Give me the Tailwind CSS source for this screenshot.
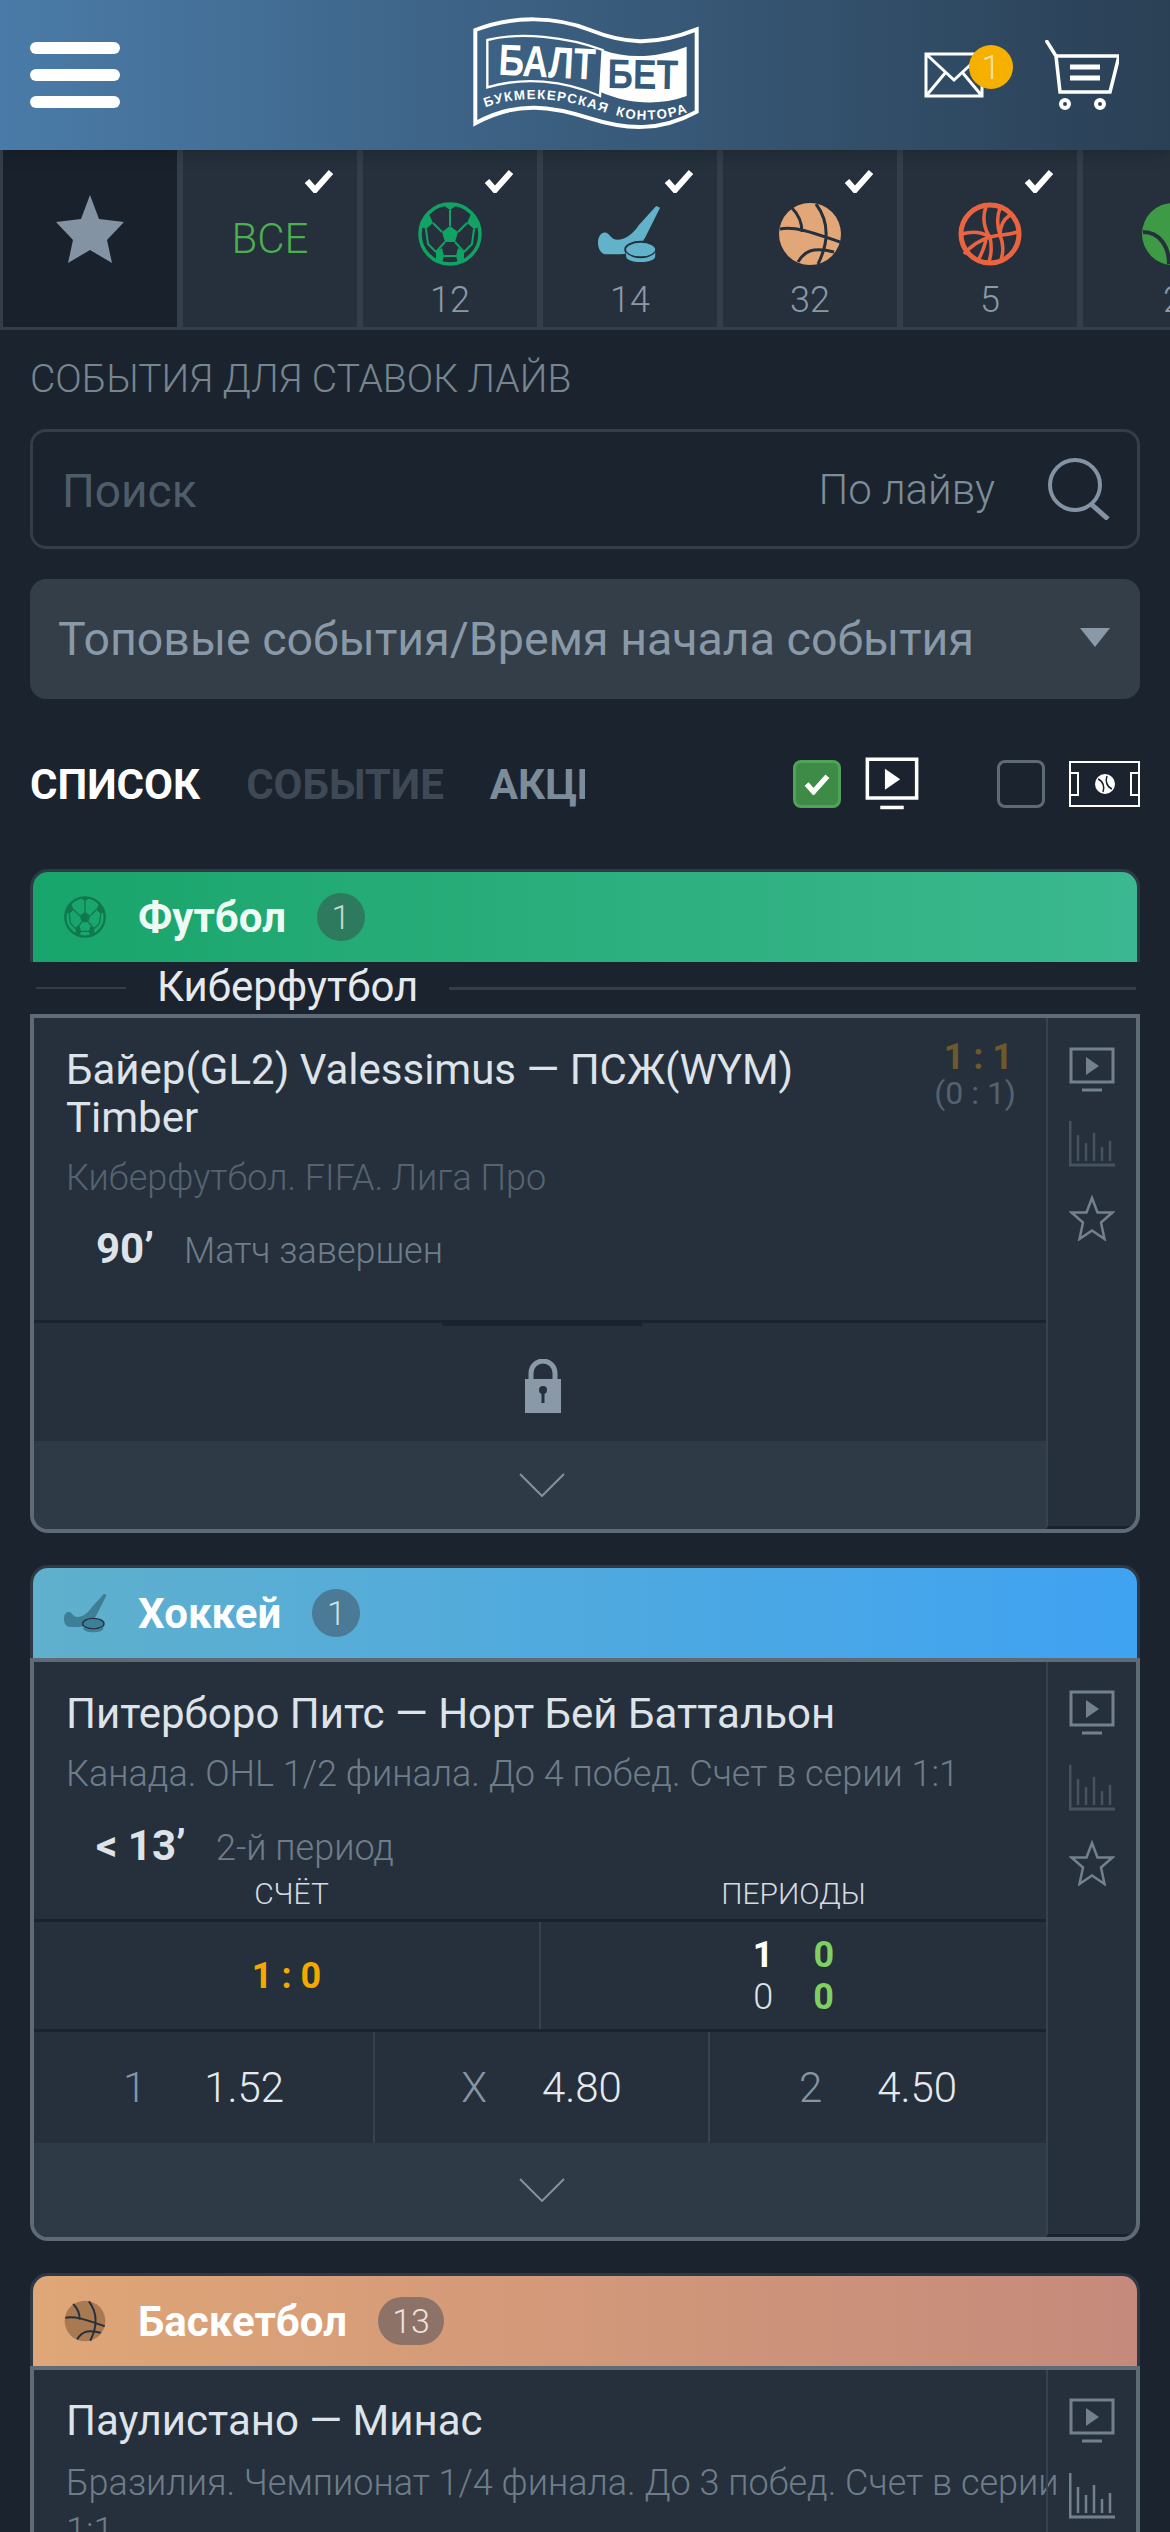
<!DOCTYPE html>
<html lang="ru">
<head>
    <meta charset="UTF-8">
    <meta name="viewport" content="width=device-width, initial-scale=1.0">
    <title>Балтбет - события лайв</title>
    <script src="https://cdn.jsdelivr.net/npm/@tailwindcss/browser@4"></script>
</head>
<body class="bg-[#1b232e] font-[Roboto,sans-serif]">
    <!-- shared icons -->
    <svg class="hidden">
        <defs>
            <symbol id="ball" viewBox="0 0 64 64">
                <circle cx="32" cy="32" r="30" fill="none" stroke="currentColor" stroke-width="3.500"/>
                <path d="M32 24l8 6-3 10H27l-3-10zM25 3l7 5 7-5zM53 12l-4 9 7 6 5-2-2-9zM11 12l4 9-7 6-5-2 2-9zM18 50l6-4 2 8-2 7-6-4zM46 50l-6-4-2 8 2 7 6-4z" fill="currentColor"/>
                <path d="M32 8v16M40 30l9-9M24 30l-9-9M27 40l-9 10M37 40l9 10M26 54h12M8 27l2 15 8 8M56 27l-2 15-8 8" stroke="currentColor" stroke-width="2" fill="none"/>
            </symbol>
            <symbol id="stick" viewBox="0 0 66 58">
                <path d="M60 0l4 2-13 26C45 42 34 50 22 50H9C3 50 0 44 0 38c0-8 5-12 9-10 4 2 5 7 11 7 8 0 16-6 22-15z" fill="currentColor"/>
                <ellipse cx="44" cy="45" rx="16" ry="8" fill="currentColor" stroke="#25303c" stroke-width="2"/>
                <path d="M29 48v4c0 4 7 6 15 6s15-2 15-6v-4c-3 4-9 6-15 6s-12-2-15-6z" fill="currentColor"/>
            </symbol>
            <symbol id="basket" viewBox="0 0 64 64">
                <circle cx="32" cy="32" r="31" fill="currentColor"/>
                <path d="M2 27c16-3 34 4 60 13M38 2c12 16 14 36 2 60M14 6c8 8 10 16 10 24M20 60c6-10 14-16 36-10" fill="none" stroke="#25303c" stroke-width="3"/>
            </symbol>
            <symbol id="volley" viewBox="0 0 64 64">
                <circle cx="32" cy="32" r="29" fill="none" stroke="currentColor" stroke-width="5"/>
                <path d="M28 5c-4 10-2 22 4 30M42 6c-3 8-3 18 0 27M52 13c-6 4-10 10-10 20M32 35c12-3 22-2 29-6M32 35c-10 3-20 10-26 17M32 35c-8-5-18-6-28-3M42 33c4 10 4 18 0 27M32 35c2 10 2 18-2 27M28 38c-2 8-4 14-8 20" fill="none" stroke="currentColor" stroke-width="3.500"/>
            </symbol>
            <symbol id="tv" viewBox="0 0 46 46">
                <path d="M2 2h42v33H2z" fill="none" stroke="currentColor" stroke-width="3"/>
                <path d="M17 10l13 9-13 9z" fill="currentColor"/>
                <path d="M13 43h20" stroke="currentColor" stroke-width="3"/>
            </symbol>
            <symbol id="bars" viewBox="0 0 46 46">
                <path d="M1 0v44h45" fill="none" stroke="currentColor" stroke-width="3"/>
                <path d="M9 14v26M17 22v18M25 12v28M33 26v14M41 20v20" stroke="currentColor" stroke-width="2.500"/>
            </symbol>
            <symbol id="star" viewBox="0 0 46 46">
                <path d="M23 3l5.500 14.500h15l-11.500 10 3.500 16.500-12.500-8.500-12.500 8.500 3.500-16.500-11.500-10h15z" fill="none" stroke="currentColor" stroke-width="2.500"/>
            </symbol>
            <symbol id="check" viewBox="0 0 30 24">
                <path d="M3 12l8 9L27 3" fill="none" stroke="currentColor" stroke-width="6"/>
            </symbol>
        </defs>
    </svg>

    <div class="w-[1170px] h-[2532px] overflow-hidden">
        <header class="h-[150px] bg-gradient-to-r from-[#4a7ba8] to-[#2a4055] flex items-center relative z-10 shadow-lg">
            <button class="ml-[30px] w-[90px] shrink-0 flex flex-col gap-[15px]">
                <span class="h-[12px] bg-white rounded-full"></span>
                <span class="h-[12px] bg-white rounded-full"></span>
                <span class="h-[12px] bg-white rounded-full"></span>
            </button>
            <svg class="ml-[320px] w-[300px] h-[150px] shrink-0" viewBox="0 0 900 450">
                <path d="M106 90C220 45 350 50 450 90S640 140 770 88V335C660 395 560 390 450 355S230 300 106 370Z" fill="none" stroke="#fff" stroke-width="12"/>
                <path d="M142 120C240 95 380 110 488 150L480 288C370 240 250 230 142 262Z" fill="none" stroke="#fff" stroke-width="7"/>
                <path d="M488 150C570 180 660 170 740 140V288C650 320 560 310 480 275Z" fill="#fff"/>
                <text x="174" y="224" transform="rotate(3 174 224)" fill="#fff" font-family="Liberation Sans" font-weight="700" font-size="132" textLength="290" lengthAdjust="spacingAndGlyphs">БАЛТ</text>
                <text x="502" y="264" transform="rotate(1 502 264)" fill="#365a7a" font-family="Liberation Sans" font-weight="700" font-size="124" textLength="212" lengthAdjust="spacingAndGlyphs">БЕТ</text>
                <path id="logo-a" d="M136 322C250 280 380 295 500 340" fill="none"/>
                <path id="logo-b" d="M526 345C600 370 680 360 748 335" fill="none"/>
                <text fill="#fff" font-family="Liberation Sans" font-weight="700" font-size="40"><textPath href="#logo-a" textLength="370">БУКМЕКЕРСКАЯ</textPath></text>
                <text fill="#fff" font-family="Liberation Sans" font-weight="700" font-size="40"><textPath href="#logo-b" textLength="220">КОНТОРА</textPath></text>
            </svg>
            <div class="relative ml-[184px] w-[60px] h-[46px] shrink-0">
                <svg class="w-[60px] h-[46px] text-white" viewBox="0 0 60 46" fill="none" stroke="currentColor" stroke-width="3">
                    <path d="M2 2h56v42H2zM2 2l28 26L58 2M2 44l20-24M58 44L38 20"/>
                </svg>
                <span class="absolute left-[45px] top-[-7px] w-[44px] h-[44px] rounded-full bg-[#f6b000] text-[#f7e3ab] text-[34px] font-light flex items-center justify-center">1</span>
            </div>
            <svg class="ml-[61px] w-[74px] h-[70px] shrink-0 text-white" viewBox="0 0 74 70" fill="none" stroke="currentColor">
                <path d="M1 0l10 16 4 36h50l9-36H11" stroke-width="3.500"/>
                <path d="M25 27h30M25 38h30" stroke-width="5"/>
                <circle cx="20" cy="64" r="4" stroke-width="4"/>
                <circle cx="55" cy="64" r="4" stroke-width="4"/>
            </svg>
        </header>

        <nav class="h-[180px] flex overflow-hidden border-b-[3px] border-[#333e4a]">
            <div class="w-[183px] shrink-0 bg-[#19212c] border-r-[6px] border-l-[3px] border-[#333e4a] flex items-center justify-center">
                <svg class="w-[68px] h-[68px] text-[#8493a3] -mt-[20px]" viewBox="0 0 68 68"><path d="M34 0l9 24 25 3-17 18 5 23-22-13-22 13 5-23L0 27l25-3z" fill="currentColor"/></svg>
            </div>
            <div class="w-[180px] shrink-0 bg-[#25303c] border-r-[6px] border-[#333e4a] relative flex items-center justify-center text-[#4caf50] text-[42px] font-light">
                ВСЕ
                <svg class="absolute top-[19px] right-[23px] w-[30px] h-[24px] text-white"><use href="#check"/></svg>
            </div>
            <div class="w-[180px] shrink-0 bg-[#25303c] border-r-[6px] border-[#333e4a] relative flex flex-col items-center pt-[52px] text-[#8a99a7] text-[36px] font-light">
                <svg class="w-[64px] h-[64px] text-[#10a363]"><use href="#ball"/></svg>
                <span class="mt-[13px] leading-[42px]">12</span>
                <svg class="absolute top-[19px] right-[23px] w-[30px] h-[24px] text-white"><use href="#check"/></svg>
            </div>
            <div class="w-[180px] shrink-0 bg-[#25303c] border-r-[6px] border-[#333e4a] relative flex flex-col items-center pt-[52px] text-[#8a99a7] text-[36px] font-light">
                <svg class="w-[64px] h-[64px] text-[#62b3c9]"><use href="#stick"/></svg>
                <span class="mt-[13px] leading-[42px]">14</span>
                <svg class="absolute top-[19px] right-[23px] w-[30px] h-[24px] text-white"><use href="#check"/></svg>
            </div>
            <div class="w-[180px] shrink-0 bg-[#25303c] border-r-[6px] border-[#333e4a] relative flex flex-col items-center pt-[52px] text-[#8a99a7] text-[36px] font-light">
                <svg class="w-[64px] h-[64px] text-[#e2a778]"><use href="#basket"/></svg>
                <span class="mt-[13px] leading-[42px]">32</span>
                <svg class="absolute top-[19px] right-[23px] w-[30px] h-[24px] text-white"><use href="#check"/></svg>
            </div>
            <div class="w-[180px] shrink-0 bg-[#25303c] border-r-[6px] border-[#333e4a] relative flex flex-col items-center pt-[52px] text-[#8a99a7] text-[36px] font-light">
                <svg class="w-[64px] h-[64px] text-[#ea6440]"><use href="#volley"/></svg>
                <span class="mt-[13px] leading-[42px]">5</span>
                <svg class="absolute top-[19px] right-[23px] w-[30px] h-[24px] text-white"><use href="#check"/></svg>
            </div>
            <div class="w-[180px] shrink-0 bg-[#25303c] flex flex-col items-center pt-[52px] text-[#8a99a7] text-[36px] font-light">
                <svg class="w-[64px] h-[64px]" viewBox="0 0 64 64"><circle cx="32" cy="32" r="31" fill="#3f9a46"/><path d="M2 30c16 0 26 14 26 32" fill="none" stroke="#25303c" stroke-width="4"/></svg>
                <span class="mt-[13px] leading-[42px]">2</span>
            </div>
        </nav>

        <main class="px-[30px]">
            <h1 class="h-[99px] flex items-center text-[39px] font-light text-[#76858f]">СОБЫТИЯ ДЛЯ СТАВОК ЛАЙВ</h1>

            <div class="h-[120px] rounded-[16px] border-[3px] border-[#333e4a] flex items-center pl-[29px] pr-[26px]">
                <span class="flex-1 text-[46px] text-[#4f5d69] mt-[4px]">Поиск</span>
                <span class="text-[42px] font-light text-[#7d8c99] mr-[52px]">По лайву</span>
                <svg class="w-[64px] h-[62px] text-[#8493a3]" viewBox="0 0 64 62" fill="none" stroke="currentColor" stroke-width="4">
                    <circle cx="28" cy="27" r="25"/><path d="M44 46l17 15" stroke-width="5"/>
                </svg>
            </div>

            <div class="mt-[30px] h-[120px] rounded-[16px] bg-[#333e49] flex items-center pl-[28px] pr-[30px]">
                <span class="flex-1 text-[46.500px] text-[#8a99a7] mt-[2px]">Топовые события/Время начала события</span>
                <span class="w-0 h-0 border-x-[15px] border-x-transparent border-t-[19px] border-t-[#8a99a7] -mt-[4px]"></span>
            </div>

            <div class="h-[170px] flex items-center">
                <div class="w-[555px] shrink-0 overflow-hidden flex gap-[46px] text-[42px] font-bold whitespace-nowrap">
                    <span class="text-white">СПИСОК</span>
                    <span class="text-[#3e4955]">СОБЫТИЕ</span>
                    <span class="text-[#7d8c9a]">АКЦИИ</span>
                </div>
                <span class="ml-[208px] w-[48px] h-[48px] rounded-[8px] bg-[#3d8b47] border-[3px] border-[#4fa356] flex items-center justify-center">
                    <svg class="w-[26px] h-[22px] text-white"><use href="#check"/></svg>
                </span>
                <svg class="ml-[24px] w-[54px] h-[54px] text-white" viewBox="0 0 46 46"><use href="#tv"/></svg>
                <span class="ml-[78px] w-[48px] h-[48px] rounded-[8px] border-[3px] border-[#5e6a75]"></span>
                <svg class="ml-[24px] w-[71px] h-[46px] text-white" viewBox="0 0 71 46" fill="none" stroke="currentColor" stroke-width="2">
                    <path d="M1 1h69v44H1zM1 12h8v22H1zM70 12h-8v22h8z"/>
                    <circle cx="36" cy="23" r="9" fill="currentColor"/>
                    <path d="M29 18c5 2 7 8 5 13M43 28c-5-2-7-8-5-13" stroke="#1b232e" stroke-width="1.500"/>
                </svg>
            </div>

            <!-- футбол -->
            <section>
                <div class="h-[93px] rounded-t-[18px] border-t-[3px] border-x-[3px] border-[#2e3945]">
                    <div class="h-[90px] rounded-t-[15px] bg-gradient-to-r from-[#17a56b] to-[#3bb88f] flex items-center pl-[31px]">
                        <svg class="w-[42px] h-[42px] text-[#10784e]"><use href="#ball"/></svg>
                        <span class="ml-[32px] text-[42px] font-bold text-[#eefbf5]">Футбол</span>
                        <span class="ml-[31px] w-[48px] h-[48px] rounded-full bg-[#2e7a5e] text-[#c5d9d0] text-[34px] font-light flex items-center justify-center">1</span>
                    </div>
                </div>
                <div class="h-[52px] flex items-center pl-[6px] pr-[4px]">
                    <span class="w-[90px] h-[2px] bg-[#333e4a]"></span>
                    <span class="mx-[31px] text-[42px] leading-[50px] text-[#e6eaee] -mt-[2px]">Киберфутбол</span>
                    <span class="flex-1 h-[3px] bg-[#333e4a]"></span>
                </div>
                <div class="h-[519px] flex bg-[#25303c] border-[4px] border-[#5e6a75] rounded-b-[18px] overflow-hidden">
                    <div class="w-[1012px] shrink-0 flex flex-col">
                        <div class="h-[302px] relative pl-[32px] pt-[28px]">
                            <p class="w-[800px] text-[42px] leading-[48px] text-[#dde3e8]">Байер(GL2) Valessimus — ПСЖ(WYM) Timber</p>
                            <p class="mt-[12px] text-[36px] leading-[48px] font-light text-[#56636f]">Киберфутбол. FIFA. Лига Про</p>
                            <p class="mt-[15px] ml-[30px] flex items-baseline">
                                <span class="text-[42px] font-bold text-[#dde3e8] w-[88px]">90’</span>
                                <span class="text-[36px] font-light text-[#6f7d89]">Матч завершен</span>
                            </p>
                            <div class="absolute right-[30px] top-[18px] text-right">
                                <p class="text-[36px] leading-[42px] font-bold text-[#6b5a2a] pr-[3px]">1 : 1</p>
                                <p class="text-[32px] leading-[30px] text-[#55616d]">(0 : 1)</p>
                            </div>
                        </div>
                        <div class="h-[121px] border-t-[3px] border-[#1a232d] relative flex items-center justify-center pt-[8px] pl-[6px]">
                            <span class="absolute top-0 left-[408px] w-[200px] h-[3px] bg-[#1a232d]"></span>
                            <svg class="w-[36px] h-[54px] text-[#8a99a7]" viewBox="0 0 36 54">
                                <path d="M6 20V14a12 12 0 0 1 24 0v6" fill="none" stroke="currentColor" stroke-width="5"/>
                                <path d="M0 20h36v34H0z" fill="currentColor"/>
                                <circle cx="18" cy="31" r="4" fill="#25303c"/><path d="M16.500 32h3v12h-3z" fill="#25303c"/>
                            </svg>
                        </div>
                        <div class="flex-1 bg-[#2e3b47] flex items-center justify-center pl-[3px]">
                            <svg class="w-[46px] h-[24px] text-[#8292a0]" viewBox="0 0 46 24" fill="none" stroke="currentColor" stroke-width="2"><path d="M1 1l22 22L45 1"/></svg>
                        </div>
                    </div>
                    <div class="flex-1 border-l-2 border-b-[3px] border-l-[#364250] border-b-[#1a232d] flex flex-col items-center pt-[29px] gap-[28px]">
                        <svg class="w-[46px] h-[46px] text-[#73818d]"><use href="#tv"/></svg>
                        <svg class="w-[46px] h-[46px] text-[#46535f]"><use href="#bars"/></svg>
                        <svg class="w-[46px] h-[46px] text-[#73818d]"><use href="#star"/></svg>
                    </div>
                </div>
            </section>

            <!-- хоккей -->
            <section class="mt-[32px]">
                <div class="h-[93px] rounded-t-[18px] border-t-[3px] border-x-[3px] border-[#2e3945]">
                    <div class="h-[90px] rounded-t-[15px] bg-gradient-to-r from-[#5fb0cc] to-[#3fa2f2] flex items-center pl-[31px]">
                        <svg class="w-[44px] h-[42px] text-[#3e7f98]"><use href="#stick"/></svg>
                        <span class="ml-[30px] text-[42px] font-bold text-white">Хоккей</span>
                        <span class="ml-[31px] w-[48px] h-[48px] rounded-full bg-[#4a7a95] text-[#cfe0ea] text-[34px] font-light flex items-center justify-center">1</span>
                    </div>
                </div>
                <div class="h-[583px] flex bg-[#25303c] border-[4px] border-[#5e6a75] rounded-b-[18px] overflow-hidden">
                    <div class="w-[1012px] shrink-0 flex flex-col">
                        <div class="h-[257px] relative pl-[32px] pt-[28px]">
                            <p class="text-[42px] leading-[48px] text-[#dde3e8]">Питерборо Питс — Норт Бей Баттальон</p>
                            <p class="mt-[12px] text-[36px] leading-[48px] font-light text-[#6f7d89]">Канада. OHL 1/2 финала. До 4 побед. Счет в серии 1:1</p>
                            <p class="mt-[16px] ml-[30px] flex items-baseline">
                                <span class="text-[42px] font-bold text-[#dde3e8] w-[120px]">&lt; 13’</span>
                                <span class="text-[36px] font-light text-[#6f7d89]">2-й период</span>
                            </p>
                            <div class="absolute left-0 right-0 bottom-[3px] flex text-[30px] font-light text-[#d5dbe0]">
                                <span class="w-[507px] text-center pl-[8px]">СЧЁТ</span>
                                <span class="flex-1 text-center">ПЕРИОДЫ</span>
                            </div>
                        </div>
                        <div class="h-[113px] border-t-[3px] border-b-[3px] border-[#1a232d] flex">
                            <div class="w-[507px] border-r-2 border-[#364250] flex items-center justify-center text-[36px] font-bold text-[#f5a900]">1 : 0</div>
                            <div class="flex-1 flex flex-col items-center justify-center text-[36px] leading-[42px]">
                                <p class="flex gap-[40px]"><span class="font-bold text-white">1</span><span class="font-bold text-[#7ed060]">0</span></p>
                                <p class="flex gap-[40px]"><span class="font-light text-[#dde3e8]">0</span><span class="font-bold text-[#7ed060]">0</span></p>
                            </div>
                        </div>
                        <div class="h-[111px] grid grid-cols-[339px_333px_1fr] gap-[2px] bg-[#364250] text-[42px] font-light">
                            <div class="bg-[#25303c] flex items-center justify-center gap-[58px]"><span class="text-[#8695a3]">1</span><span class="text-[#e6eaee]">1.52</span></div>
                            <div class="bg-[#25303c] flex items-center justify-center gap-[55px]"><span class="text-[#8695a3]">X</span><span class="text-[#e6eaee]">4.80</span></div>
                            <div class="bg-[#25303c] flex items-center justify-center gap-[55px]"><span class="text-[#8695a3]">2</span><span class="text-[#e6eaee]">4.50</span></div>
                        </div>
                        <div class="flex-1 bg-[#2e3b47] flex items-center justify-center pl-[3px]">
                            <svg class="w-[46px] h-[24px] text-[#8292a0]" viewBox="0 0 46 24" fill="none" stroke="currentColor" stroke-width="2"><path d="M1 1l22 22L45 1"/></svg>
                        </div>
                    </div>
                    <div class="flex-1 border-l-2 border-b-[3px] border-l-[#364250] border-b-[#1a232d] flex flex-col items-center pt-[28px] gap-[29px]">
                        <svg class="w-[46px] h-[46px] text-[#73818d]"><use href="#tv"/></svg>
                        <svg class="w-[46px] h-[46px] text-[#46535f]"><use href="#bars"/></svg>
                        <svg class="w-[46px] h-[46px] text-[#73818d]"><use href="#star"/></svg>
                    </div>
                </div>
            </section>

            <!-- баскетбол -->
            <section class="mt-[32px]">
                <div class="h-[93px] rounded-t-[18px] border-t-[3px] border-x-[3px] border-[#2e3945]">
                    <div class="h-[90px] rounded-t-[15px] bg-gradient-to-r from-[#dfa677] to-[#c58a7b] flex items-center pl-[31px]">
                        <svg class="w-[42px] h-[42px] text-[#a97a52]"><use href="#basket"/></svg>
                        <span class="ml-[32px] text-[42px] font-bold text-white">Баскетбол</span>
                        <span class="ml-[31px] w-[66px] h-[48px] rounded-full bg-[#8d7268] text-[#ece3de] text-[34px] font-light flex items-center justify-center">13</span>
                    </div>
                </div>
                <div class="h-[300px] flex bg-[#25303c] border-[4px] border-[#5e6a75]">
                    <div class="w-[1012px] shrink-0 pl-[32px] pt-[27px]">
                        <p class="text-[42px] leading-[48px] text-[#dde3e8]">Паулистано — Минас</p>
                        <p class="mt-[14px] w-[1000px] text-[36px] leading-[48px] font-light text-[#6f7d89]">Бразилия. Чемпионат 1/4 финала. До 3 побед. Счет в серии 1:1</p>
                    </div>
                    <div class="flex-1 border-l-2 border-[#364250] flex flex-col items-center pt-[28px] gap-[29px]">
                        <svg class="w-[46px] h-[46px] text-[#73818d]"><use href="#tv"/></svg>
                        <svg class="w-[46px] h-[46px] text-[#73818d]"><use href="#bars"/></svg>
                    </div>
                </div>
            </section>
        </main>
    </div>
</body>
</html>
